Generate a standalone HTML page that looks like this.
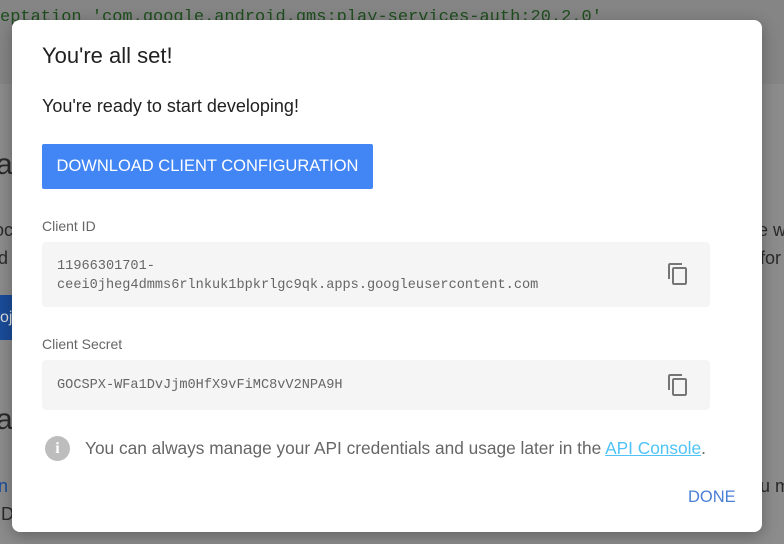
<!DOCTYPE html>
<html><head><style>
body{margin:0;width:784px;height:544px;overflow:hidden;background:#8c8c8c;font-family:"Liberation Sans",sans-serif;position:relative}
.code{position:absolute;left:0;top:0;width:784px;height:84px;background:#858585}
.code span{position:absolute;left:0;top:8px;font-family:"Liberation Mono",monospace;font-size:17px;color:#1e4e1e;white-space:nowrap}
.bg{position:absolute;color:#2a2a2a;white-space:nowrap}
.dlg{position:absolute;left:12px;top:20px;width:750px;height:512px;background:#fff;border-radius:8px;box-shadow:0 4px 16px rgba(0,0,0,.3)}
.t{position:absolute;left:30px;top:23px;font-size:22px;color:#212121}
.s{position:absolute;left:30px;top:76px;font-size:18px;color:#212121}
.btn{position:absolute;left:30px;top:124px;width:331px;height:45px;background:#4285f4;border-radius:2px;color:#fff;font-size:16.5px;line-height:45px;text-align:center;white-space:nowrap}
.lbl{position:absolute;left:30px;font-size:14px;color:#666}
.box{position:absolute;left:30px;width:668px;background:#f5f5f5;border-radius:4px;font-family:"Liberation Mono",monospace;font-size:13.6px;color:#666}
.box div{position:absolute;left:15px;white-space:nowrap}
.cp{position:absolute;right:20px}
.info{position:absolute;left:33px;top:416px;width:25px;height:25px;border-radius:50%;background:#bdbdbd;color:#fff;font-weight:bold;font-size:16px;text-align:center;line-height:25px;font-family:"Liberation Serif",serif}
.it{position:absolute;left:73px;top:418px;font-size:17.3px;color:#666;white-space:nowrap}
.it a{color:#4fc3f7;text-decoration:underline}
.done{position:absolute;left:676px;top:468px;font-size:16.5px;color:#4a7fd6}
</style></head><body>
<div class="code"><span>eptation 'com.google.android.gms:play-services-auth:20.2.0'</span></div>
<div class="bg" style="left:-4px;top:148px;font-size:30px">a</div>
<div class="bg" style="left:-6px;top:220px;font-size:18px">oc</div>
<div class="bg" style="left:-2px;top:248px;font-size:18px">d</div>
<div style="position:absolute;left:0;top:295px;width:12px;height:45px;background:#1a4c99;color:#ddd;font-size:16px;line-height:45px;overflow:hidden">oj</div>
<div class="bg" style="left:-4px;top:403px;font-size:30px">a</div>
<div class="bg" style="left:-2px;top:476px;font-size:18px;color:#1a4c99">n</div>
<div class="bg" style="left:-4px;top:504px;font-size:18px">ID</div>
<div class="bg" style="left:758px;top:220px;font-size:18px">e w</div>
<div class="bg" style="left:760px;top:248px;font-size:18px">for</div>
<div class="bg" style="left:760px;top:476px;font-size:18px">u m</div>
<div class="dlg">
<div class="t">You're all set!</div>
<div class="s">You're ready to start developing!</div>
<div class="btn">DOWNLOAD CLIENT CONFIGURATION</div>
<div class="lbl" style="top:198px">Client ID</div>
<div class="box" style="top:222px;height:65px"><div style="top:15px;line-height:19px">11966301701-<br>ceei0jheg4dmms6rlnkuk1bpkrlgc9qk.apps.googleusercontent.com</div>
<svg class="cp" style="top:20px" width="24" height="24" viewBox="0 0 24 24"><path fill="#757575" d="M16 1H4c-1.1 0-2 .9-2 2v14h2V3h12V1zm3 4H8c-1.1 0-2 .9-2 2v14c0 1.1.9 2 2 2h11c1.1 0 2-.9 2-2V7c0-1.100-.9-2-2-2zm0 16H8V7h11v14z"/></svg></div>
<div class="lbl" style="top:316px">Client Secret</div>
<div class="box" style="top:340px;height:50px"><div style="top:18px">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</div>
<svg class="cp" style="top:13px" width="24" height="24" viewBox="0 0 24 24"><path fill="#757575" d="M16 1H4c-1.1 0-2 .9-2 2v14h2V3h12V1zm3 4H8c-1.1 0-2 .9-2 2v14c0 1.1.9 2 2 2h11c1.1 0 2-.9 2-2V7c0-1.100-.9-2-2-2zm0 16H8V7h11v14z"/></svg></div>
<div class="info">i</div>
<div class="it">You can always manage your API credentials and usage later in the <a>API Console</a>.</div>
<div class="done">DONE</div>
</div>
</body></html>
